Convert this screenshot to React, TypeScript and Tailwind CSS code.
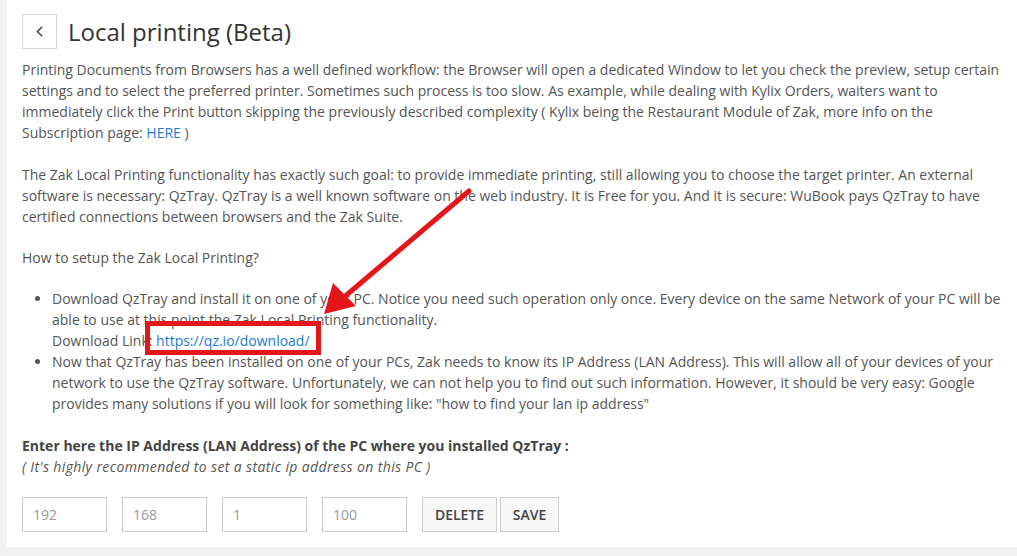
import { ChevronLeft } from "lucide-react";

const IP_PARTS = ["192", "168", "1", "100"];

export default function App() {
  return (
    <div className="relative min-h-[556px] bg-[#f1f1f1] pl-[7px] font-['Open_Sans',sans-serif] text-[14px] leading-[21px] text-[#555]">
      <div className="h-[547px] bg-white px-[15px] pt-[14px]">
        {/* header */}
        <div className="flex items-center gap-[11px]">
          <button className="flex h-[35px] w-[35px] items-center justify-center border border-[#d4d4d4] bg-white text-[#444]">
            <ChevronLeft className="h-[17px] w-[17px]" strokeWidth={2.25} />
          </button>
          <h1 className="text-[24px] leading-[35px] text-[#333]">Local printing (Beta)</h1>
        </div>

        <div className="mt-[10px]">
          <p>
            Printing Documents from Browsers has a well defined workflow: the Browser will open a dedicated Window to let you check the preview, setup certain settings and to select the preferred printer. Sometimes such process is too slow. As example, while dealing with Kylix Orders, waiters want to immediately click the Print button skipping the previously described complexity ( Kylix being the Restaurant Module of Zak, more info on the Subscription page: <a className="text-[#1f7ad3]">HERE</a> )
          </p>
          <p className="mt-[21px]">
            The Zak Local Printing functionality has exactly such goal: to provide immediate printing, still allowing you to choose the target printer. An external software is necessary: QzTray. QzTray is a well known software on the web industry. It is Free for you. And it is secure: WuBook pays QzTray to have certified connections between browsers and the Zak Suite.
          </p>
          <p className="mt-[20px]">How to setup the Zak Local Printing?</p>
          <ul className="mt-[20px] list-disc pl-[30px]">
            <li>
              Download QzTray and install it on one of your PC. Notice you need such operation only once. Every device on the same Network of your PC will be able to use at this point the Zak Local Printing functionality.
              <br />
              Download Link: <a className="text-[#1f7ad3]">https://qz.io/download/</a>
            </li>
            <li>
              Now that QzTray has been installed on one of your PCs, Zak needs to know its IP Address (LAN Address). This will allow all of your devices of your network to use the QzTray software. Unfortunately, we can not help you to find out such information. However, it should be very easy: Google provides many solutions if you will look for something like: "how to find your lan ip address"
            </li>
          </ul>

          <p className="mt-[21px] font-bold text-[#444]">
            Enter here the IP Address (LAN Address) of the PC where you installed QzTray :
          </p>
          <p className="italic tracking-[0.37px]">( It's highly recommended to set a static ip address on this PC )</p>

          <div className="mt-[20px] flex items-center gap-[15px]">
            {IP_PARTS.map((part) => (
              <input
                key={part}
                placeholder={part}
                className="h-[35px] w-[85px] border border-[#ccc] px-[10px] text-[14px] text-[#555] placeholder:text-[#999]"
              />
            ))}
            <div className="flex gap-[3px]">
              <button className="h-[35px] w-[75px] border border-[#ccc] bg-[#f7f7f7] text-[14px] font-semibold text-[#444]">
                DELETE
              </button>
              <button className="h-[35px] w-[59px] border border-[#ccc] bg-[#f7f7f7] text-[14px] font-semibold text-[#444]">
                SAVE
              </button>
            </div>
          </div>
        </div>
      </div>

      {/* annotation overlay */}
      <div className="absolute left-[145px] top-[321px] h-[34px] w-[176px] border-[5px] border-[#e3161a]" />
      <svg className="pointer-events-none absolute left-0 top-0" width="1017" height="556">
        <line x1="469" y1="191" x2="343" y2="298" stroke="#e3161a" strokeWidth="5" strokeLinecap="round" />
        <polygon points="324,314 333,283 356,306" fill="#e3161a" />
      </svg>
    </div>
  );
}
